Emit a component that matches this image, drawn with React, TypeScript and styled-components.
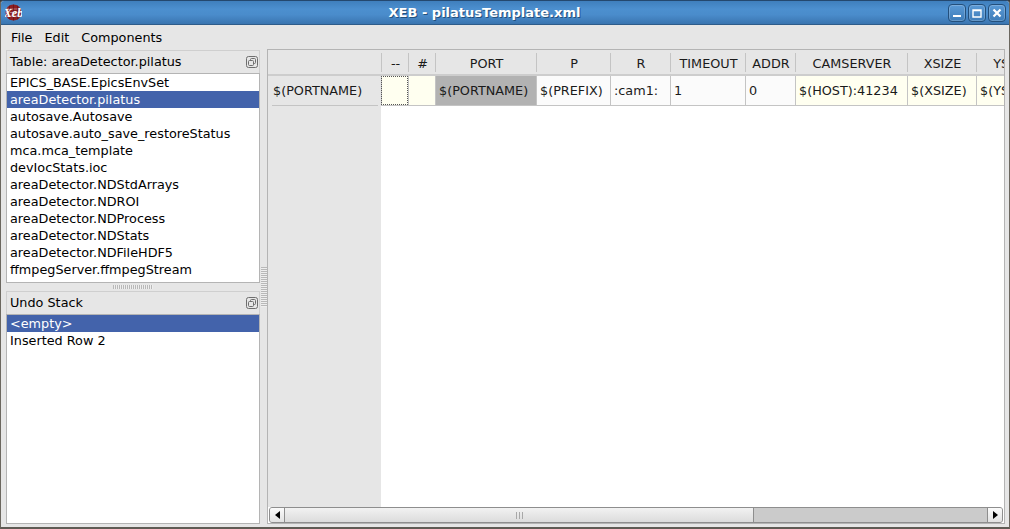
import React from 'react';
import styled, { createGlobalStyle } from 'styled-components';

const GlobalStyle = createGlobalStyle`
  html, body {
    margin: 0;
    padding: 0;
    width: 1010px;
    height: 529px;
    overflow: hidden;
    background: #3c3a36;
    font-family: "DejaVu Sans", sans-serif;
    font-size: 12.8px;
    color: #000;
  }
  * { box-sizing: border-box; }
`;

const Window = styled.div`
  width: 1010px;
  height: 529px;
  display: flex;
  flex-direction: column;
  background: #e6e6e6;
  border-left: 1px solid #6b675f;
  border-right: 1px solid #6b675f;
  border-bottom: 2px solid #5f5b54;
  border-top: 1px solid #24486f;
  border-radius: 4px 4px 0 0;
  overflow: hidden;
`;

const TitleBar = styled.div`
  height: 24px;
  flex: none;
  display: flex;
  align-items: center;
  padding: 0 3px 0 4px;
  background: linear-gradient(#3f7fbd 0%, #4c8fcf 35%, #4a8ccb 60%, #3a75b0 100%);
  border-bottom: 1px solid #2e5c8a;
`;

const TitleText = styled.div`
  flex: 1;
  text-align: center;
  color: #fff;
  font-weight: bold;
  font-size: 13px;
  text-shadow: 1px 1px 0 #23507c;
  padding-right: 1px;
`;

const WinButtons = styled.div`
  display: flex;
  gap: 2px;
`;

const WinButton = styled.div`
  width: 18px;
  height: 18px;
  border: 1px solid #234f7c;
  border-radius: 4px;
  background: linear-gradient(#5b9ad6, #3d7cb9);
  box-shadow: inset 0 0 0 1px rgba(255, 255, 255, 0.2);
  display: flex;
  align-items: center;
  justify-content: center;
`;

const MenuBar = styled.div`
  height: 24px;
  flex: none;
  display: flex;
  align-items: center;
  padding: 0 4px;
`;

const MenuItem = styled.div`
  padding: 0 6px;
`;

const Body = styled.div`
  flex: 1;
  min-height: 0;
  display: flex;
  padding: 0 4px 3px 5px;
`;

const LeftColumn = styled.div`
  width: 254px;
  flex: none;
  display: flex;
  flex-direction: column;
  padding-top: 1px;
`;

const Dock = styled.div<{ $height: number }>`
  height: ${p => p.$height}px;
  flex: none;
  display: flex;
  flex-direction: column;
`;

const DockHeader = styled.div`
  height: 23px;
  flex: none;
  display: flex;
  align-items: center;
  justify-content: space-between;
  padding: 0 1px 1px 3px;
  border: 1px solid #cfcfcf;
  border-bottom: none;
`;

const FloatIcon = styled.svg`
  width: 12px;
  height: 12px;
  display: block;
`;

const ListBox = styled.div`
  flex: 1;
  min-height: 0;
  background: #fff;
  border: 1px solid #b4b4b4;
  overflow: hidden;
`;

const ListRow = styled.div<{ $selected?: boolean }>`
  height: 17px;
  line-height: 17px;
  padding-left: 3px;
  white-space: nowrap;
  background: ${p => (p.$selected ? '#4363ab' : 'transparent')};
  color: ${p => (p.$selected ? '#fff' : '#000')};
`;

const HSplitter = styled.div`
  height: 8px;
  flex: none;
  display: flex;
  align-items: center;
  justify-content: center;
`;

const Grip = styled.div<{ $vertical?: boolean }>`
  width: ${p => (p.$vertical ? '6px' : '40px')};
  height: ${p => (p.$vertical ? '40px' : '4px')};
  background: ${p =>
    p.$vertical
      ? 'repeating-linear-gradient(to bottom, #b8b8b8 0 1px, #eeeeee 1px 2px)'
      : 'repeating-linear-gradient(to right, #b8b8b8 0 1px, #eeeeee 1px 2px)'};
`;

const VSplitter = styled.div`
  width: 7px;
  flex: none;
  display: flex;
  align-items: center;
  justify-content: center;
`;

const TablePane = styled.div`
  flex: 1;
  min-width: 0;
  display: flex;
  flex-direction: column;
  border: 1px solid #b4b4b4;
  background: #fff;
`;

const TableArea = styled.div`
  flex: 1;
  min-height: 0;
  display: flex;
  overflow: hidden;
`;

const RowHeaderCol = styled.div`
  width: 113px;
  flex: none;
  background: #e6e6e6;
  display: flex;
  flex-direction: column;
`;

const Corner = styled.div`
  height: 26px;
  flex: none;
  border-bottom: 2px solid #cdcdcd;
`;

const RowHeader = styled.div`
  height: 30px;
  padding-left: 5px;
  line-height: 30px;
  position: relative;
  color: #1a1a1a;
  &::after {
    content: '';
    position: absolute;
    left: 4px;
    right: 3px;
    bottom: 0;
    height: 1px;
    background: #c4c4c4;
  }
`;

const Columns = styled.div`
  flex: 1;
  min-width: 0;
  overflow: hidden;
`;

const HeaderRow = styled.div`
  display: flex;
  height: 26px;
  background: #e6e6e6;
  border-bottom: 2px solid #cdcdcd;
`;

const HeaderCell = styled.div<{ $w: number }>`
  width: ${p => p.$w}px;
  flex: none;
  padding: 1px 0 0 2px;
  text-align: center;
  line-height: 25px;
  white-space: nowrap;
  overflow: hidden;
  color: #1a1a1a;
  position: relative;
  &::before {
    content: '';
    position: absolute;
    left: 0;
    top: 3px;
    bottom: 2px;
    width: 1px;
    background: #c4c4c4;
  }
`;

const DataRow = styled.div`
  display: flex;
  height: 30px;
  border-bottom: 1px solid #c4c4c4;
`;

type CellKind = 'required' | 'plain' | 'selected' | 'focus';

const cellBackground: Record<CellKind, string> = {
  required: '#fffff0',
  focus: '#fffff0',
  plain: '#fbfbfb',
  selected: '#b2b2b2',
};

const DataCell = styled.div<{ $w: number; $kind: CellKind }>`
  width: ${p => p.$w}px;
  flex: none;
  padding-left: 3px;
  line-height: 29px;
  white-space: nowrap;
  overflow: hidden;
  color: #1a1a1a;
  background: ${p => cellBackground[p.$kind]};
  border-left: 1px solid #c4c4c4;
  outline: ${p => (p.$kind === 'focus' ? '1px dotted #555' : 'none')};
  outline-offset: -1px;
`;

const ScrollBar = styled.div`
  height: 16px;
  flex: none;
  margin: 0 1px 0 1px;
  display: flex;
  border: 1px solid #8e8e8e;
  border-radius: 3px;
  background: #cbcbcb;
  overflow: hidden;
`;

const ScrollButton = styled.div`
  width: 14px;
  flex: none;
  display: flex;
  align-items: center;
  justify-content: center;
  background: linear-gradient(#fbfbfb, #e2e2e2);
`;

const ScrollThumb = styled.div`
  width: 470px;
  flex: none;
  display: flex;
  align-items: center;
  justify-content: center;
  gap: 2px;
  background: linear-gradient(#f2f2f2, #dcdcdc);
  border-left: 1px solid #8e8e8e;
  border-right: 1px solid #8e8e8e;
`;

const ThumbLine = styled.div`
  width: 1px;
  height: 7px;
  background: #a8a8a8;
`;

const ScrollTrack = styled.div`
  flex: 1;
`;

const ButtonDivider = styled.div`
  width: 1px;
  flex: none;
  background: #8e8e8e;
`;

const Logo = () => (
  <svg width="17" height="17" viewBox="0 0 17 17">
    <circle cx="8.5" cy="8.5" r="8" fill="#8e1f22" />
    <path d="M1 5h15M0.7 8.5h15.6M1 12h15" stroke="#c9a0a0" strokeWidth="0.7" />
    <path d="M8.5 0.5v16M4.5 1.5v14M12.5 1.5v14" stroke="#5a1012" strokeWidth="0.6" />
    <text
      x="8.5"
      y="12.5"
      textAnchor="middle"
      fontFamily="Liberation Serif, serif"
      fontStyle="italic"
      fontWeight="bold"
      fontSize="12"
      fill="#fff"
    >
      Xeb
    </text>
  </svg>
);

const Float = () => (
  <FloatIcon viewBox="0 0 12 12">
    <rect x="0.5" y="0.5" width="11" height="11" rx="2" fill="none" stroke="#6e6e6e" />
    <rect x="4.5" y="2.5" width="5" height="5" rx="1" fill="none" stroke="#6e6e6e" />
    <rect x="2.5" y="4.5" width="5" height="5" rx="1" fill="#e6e6e6" stroke="#6e6e6e" />
  </FloatIcon>
);

const Arrow = ({ dir }: { dir: 'left' | 'right' }) => (
  <svg width="5" height="8" viewBox="0 0 5 8">
    <path d={dir === 'left' ? 'M5 0v8L0 4z' : 'M0 0v8l5-4z'} fill="#000" />
  </svg>
);

const tables = [
  'EPICS_BASE.EpicsEnvSet',
  'areaDetector.pilatus',
  'autosave.Autosave',
  'autosave.auto_save_restoreStatus',
  'mca.mca_template',
  'devIocStats.ioc',
  'areaDetector.NDStdArrays',
  'areaDetector.NDROI',
  'areaDetector.NDProcess',
  'areaDetector.NDStats',
  'areaDetector.NDFileHDF5',
  'ffmpegServer.ffmpegStream',
];

const columns: { title: string; w: number; value: string; kind: CellKind }[] = [
  { title: '--', w: 27, value: '', kind: 'focus' },
  { title: '#', w: 27, value: '', kind: 'required' },
  { title: 'PORT', w: 101, value: '$(PORTNAME)', kind: 'selected' },
  { title: 'P', w: 74, value: '$(PREFIX)', kind: 'plain' },
  { title: 'R', w: 60, value: ':cam1:', kind: 'plain' },
  { title: 'TIMEOUT', w: 75, value: '1', kind: 'plain' },
  { title: 'ADDR', w: 50, value: '0', kind: 'plain' },
  { title: 'CAMSERVER', w: 112, value: '$(HOST):41234', kind: 'required' },
  { title: 'XSIZE', w: 69, value: '$(XSIZE)', kind: 'required' },
  { title: 'YSIZE', w: 69, value: '$(YSIZE)', kind: 'required' },
];

export default function App() {
  return (
    <>
      <GlobalStyle />
      <Window>
        <TitleBar>
          <Logo />
          <TitleText>XEB - pilatusTemplate.xml</TitleText>
          <WinButtons>
            <WinButton>
              <svg width="10" height="10" viewBox="0 0 10 10">
                <rect x="1" y="7" width="8" height="2" fill="#fff" />
              </svg>
            </WinButton>
            <WinButton>
              <svg width="10" height="10" viewBox="0 0 10 10">
                <path d="M1 2h8v7H1zM1 2.5h8" fill="none" stroke="#fff" strokeWidth="1.4" />
              </svg>
            </WinButton>
            <WinButton>
              <svg width="10" height="10" viewBox="0 0 10 10">
                <path d="M1.5 1.5l7 7M8.5 1.5l-7 7" stroke="#fff" strokeWidth="2.2" />
              </svg>
            </WinButton>
          </WinButtons>
        </TitleBar>
        <MenuBar>
          <MenuItem>File</MenuItem>
          <MenuItem>Edit</MenuItem>
          <MenuItem>Components</MenuItem>
        </MenuBar>
        <Body>
          <LeftColumn>
            <Dock $height={233}>
              <DockHeader>
                <span>Table: areaDetector.pilatus</span>
                <Float />
              </DockHeader>
              <ListBox>
                {tables.map(name => (
                  <ListRow key={name} $selected={name === 'areaDetector.pilatus'}>
                    {name}
                  </ListRow>
                ))}
              </ListBox>
            </Dock>
            <HSplitter>
              <Grip />
            </HSplitter>
            <Dock $height={233}>
              <DockHeader>
                <span>Undo Stack</span>
                <Float />
              </DockHeader>
              <ListBox>
                <ListRow $selected>&lt;empty&gt;</ListRow>
                <ListRow>Inserted Row 2</ListRow>
              </ListBox>
            </Dock>
          </LeftColumn>
          <VSplitter>
            <Grip $vertical />
          </VSplitter>
          <TablePane>
            <TableArea>
              <RowHeaderCol>
                <Corner />
                <RowHeader>$(PORTNAME)</RowHeader>
              </RowHeaderCol>
              <Columns>
                <HeaderRow>
                  {columns.map(c => (
                    <HeaderCell key={c.title} $w={c.w}>
                      {c.title}
                    </HeaderCell>
                  ))}
                </HeaderRow>
                <DataRow>
                  {columns.map(c => (
                    <DataCell key={c.title} $w={c.w} $kind={c.kind}>
                      {c.value}
                    </DataCell>
                  ))}
                </DataRow>
              </Columns>
            </TableArea>
            <ScrollBar>
              <ScrollButton>
                <Arrow dir="left" />
              </ScrollButton>
              <ScrollThumb>
                <ThumbLine />
                <ThumbLine />
                <ThumbLine />
              </ScrollThumb>
              <ScrollTrack />
              <ButtonDivider />
              <ScrollButton>
                <Arrow dir="right" />
              </ScrollButton>
            </ScrollBar>
          </TablePane>
        </Body>
      </Window>
    </>
  );
}
